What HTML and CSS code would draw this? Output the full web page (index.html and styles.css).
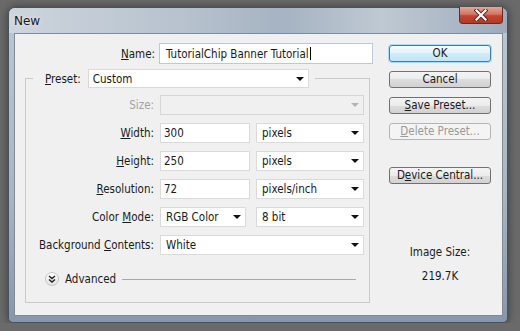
FILE: index.html
```html
<!DOCTYPE html>
<html lang="en">
<head>
  <meta charset="UTF-8">
  <title>New</title>
  <link rel="stylesheet" href="styles.css">
</head>
<body>
  <div class="window">
    <div class="titlebar">
      <span class="title">New</span>
      <span class="close">
        <svg width="14" height="12" viewBox="0 0 14 12">
          <path d="M2.5 1.5 L11.5 10.5 M11.5 1.5 L2.5 10.5" stroke="#5a2218" stroke-width="4" stroke-linecap="square"/>
          <path d="M2.5 1.5 L11.5 10.5 M11.5 1.5 L2.5 10.5" stroke="#fff" stroke-width="2.2" stroke-linecap="square"/>
        </svg>
      </span>
    </div>

    <div class="client">
      <div class="main">
        <div class="name-row">
          <span class="name-label"><u>N</u>ame:</span>
          <div class="field name-field">TutorialChip Banner Tutorial<span class="caret"></span></div>
        </div>

        <fieldset class="group">
          <legend class="legend">
            <span class="legend-label"><u>P</u>reset:</span>
            <div class="field select preset-select">Custom<span class="arrow"></span></div>
          </legend>

          <div class="rows">
            <div class="row">
              <span class="lbl disabled">Size:</span>
              <div class="field select off wide"><span class="arrow grey"></span></div>
            </div>
            <div class="row">
              <span class="lbl"><u>W</u>idth:</span>
              <div class="field input">300</div>
              <div class="field select unit">pixels<span class="arrow"></span></div>
            </div>
            <div class="row">
              <span class="lbl"><u>H</u>eight:</span>
              <div class="field input">250</div>
              <div class="field select unit">pixels<span class="arrow"></span></div>
            </div>
            <div class="row">
              <span class="lbl"><u>R</u>esolution:</span>
              <div class="field input">72</div>
              <div class="field select unit">pixels/inch<span class="arrow"></span></div>
            </div>
            <div class="row">
              <span class="lbl">Color <u>M</u>ode:</span>
              <div class="field select mode">RGB Color<span class="arrow"></span></div>
              <div class="field select unit">8 bit<span class="arrow"></span></div>
            </div>
            <div class="row">
              <span class="lbl">Background <u>C</u>ontents:</span>
              <div class="field select wide">White<span class="arrow"></span></div>
            </div>
          </div>

          <div class="advanced">
            <span class="adv-icon">
              <svg width="8" height="8" viewBox="0 0 8 8">
                <path d="M1 1 L4 3.5 L7 1 M1 4.5 L4 7 L7 4.5" fill="none" stroke="#222" stroke-width="1.4"/>
              </svg>
            </span>
            <span class="adv-text">Advanced</span>
            <span class="adv-line"></span>
          </div>
        </fieldset>
      </div>

      <div class="side">
        <button class="btn default">OK</button>
        <button class="btn">Cancel</button>
        <button class="btn"><u>S</u>ave Preset...</button>
        <button class="btn disabled-btn"><u>D</u>elete Preset...</button>
        <button class="btn device">D<u>e</u>vice Central...</button>
        <div class="image-size">
          <div>Image Size:</div>
          <div class="size-value">219.7K</div>
        </div>
      </div>
    </div>
  </div>
</body>
</html>
```

FILE: styles.css
```css
/* Page */
body {
  margin: 0;
  padding: 7px 0 0 8px;
  background: #6a6a6a;
  font-family: "DejaVu Sans Condensed", "DejaVu Sans", sans-serif;
  font-size: 11.5px;
  color: #1a1a1a;
}

u {
  text-decoration: underline;
  text-underline-offset: 1px;
}

/* Window frame */
.window {
  width: 500px;
  height: 316px;
  box-sizing: border-box;
  border: 1px solid #47525e;
  border-radius: 7px 7px 5px 5px;
  padding: 0 4px 6px 5px;
  background: linear-gradient(to bottom, #bcc7d2 0%, #a9b5c2 60%, #8797aa 100%);
  box-shadow: 0 0 8px rgba(0, 0, 0, 0.45);
}

.titlebar {
  height: 25px;
  display: flex;
  justify-content: space-between;
  align-items: flex-start;
  background: linear-gradient(to right, #cdd5dd 0%, #b7c2ce 35%, #a5b3c2 55%, #bfc9d3 75%, #9dabbb 100%);
  margin: 0 -4px 0 -5px;
  padding: 0 4px 0 5px;
  border-radius: 6px 6px 0 0;
}

.title {
  font-family: "DejaVu Sans", sans-serif;
  font-size: 12px;
  color: #1a1a1a;
  padding-top: 6px;
  text-shadow: 0 0 4px rgba(255, 255, 255, 0.8);
}

.close {
  width: 44px;
  height: 17px;
  margin-top: -1px;
  box-sizing: border-box;
  border: 1px solid #6b2a20;
  border-top: none;
  border-radius: 0 0 4px 4px;
  background: linear-gradient(to bottom, #e6a497 0%, #d37563 45%, #c2452f 55%, #b03a26 100%);
  display: flex;
  align-items: center;
  justify-content: center;
}

/* Client area */
.client {
  width: 489px;
  height: 283px;
  box-sizing: border-box;
  border: 1px solid #7c8c9e;
  background: #f0f0f0;
  display: flex;
}

.main {
  width: 362px;
  padding-top: 9px;
}

.name-row {
  display: flex;
  align-items: center;
}

.name-label {
  width: 140px;
  text-align: right;
  margin-right: 4px;
}

.field {
  height: 20px;
  box-sizing: border-box;
  border: 1px solid #dadada;
  background: #fff;
  display: flex;
  align-items: center;
  padding-left: 5px;
  white-space: nowrap;
}

.name-field {
  width: 214px;
  height: 21px;
  border-color: #b9cbda;
  padding-left: 6px;
}

.caret {
  width: 1px;
  height: 13px;
  background: #000;
  margin-left: 1px;
}

.select {
  position: relative;
}

.arrow {
  position: absolute;
  right: 4px;
  top: 7px;
  width: 0;
  height: 0;
  border-left: 4px solid transparent;
  border-right: 4px solid transparent;
  border-top: 4px solid #111;
}

.arrow.grey {
  border-top-color: #b4b4b4;
}

/* Group box */
.group {
  margin: 5px 0 0 10px;
  width: 345px;
  box-sizing: border-box;
  border: 1px solid #c9c9c9;
  padding: 0;
  min-width: 0;
}

.legend {
  margin-left: 7px;
  padding: 0 6px 0 12px;
  display: flex;
  align-items: center;
}

.legend-label {
  margin-right: 7px;
}

.preset-select {
  width: 221px;
  height: 19px;
  padding-left: 4px;
}

.rows {
  padding: 7px 5px 0 0;
  display: flex;
  flex-direction: column;
  gap: 8px;
}

.row {
  display: flex;
  align-items: center;
}

.lbl {
  width: 128px;
  text-align: right;
  margin-right: 6px;
  white-space: nowrap;
}

.disabled {
  color: #a3a3a3;
}

.wide {
  width: 204px;
}

.off {
  background: #f0f0f0;
  border-color: #d6d6d6;
}

.input {
  width: 90px;
  padding-left: 3px;
}

.mode {
  width: 86px;
}

.unit {
  width: 108px;
  margin-left: auto;
}

.mode + .unit {
  margin-left: 10px;
}

.input + .unit {
  margin-left: 6px;
}

/* Advanced */
.advanced {
  display: flex;
  align-items: center;
  margin: 17px 0 16px 19px;
}

.adv-icon {
  width: 14px;
  height: 14px;
  box-sizing: border-box;
  border: 1px solid #c4c4c4;
  border-radius: 50%;
  background: linear-gradient(to bottom, #ffffff, #e2e2e2);
  display: flex;
  align-items: center;
  justify-content: center;
}

.adv-text {
  margin: 0 6px 0 6px;
}

.adv-line {
  width: 234px;
  height: 1px;
  background: #a8a8a8;
}

/* Buttons column */
.side {
  width: 102px;
  margin-left: 12px;
  padding-top: 11px;
  display: flex;
  flex-direction: column;
  gap: 9px;
}

.btn {
  height: 17px;
  width: 102px;
  box-sizing: border-box;
  border: 1px solid #707070;
  border-radius: 3px;
  background: linear-gradient(to bottom, #f4f4f4 0%, #ebebeb 50%, #dddddd 50%, #d2d2d2 100%);
  font-family: inherit;
  font-size: 11.5px;
  color: #1a1a1a;
  padding: 0;
  line-height: 15px;
}

.btn.default {
  border-color: #3c7fb1;
  background: linear-gradient(to bottom, #f3fafe 0%, #e3f3fc 50%, #d2ecfa 50%, #c4e5f7 100%);
  box-shadow: 0 0 0 1px #a7dcf7;
}

.btn.disabled-btn {
  border-color: #b3b6b9;
  background: #f4f4f4;
  color: #9a9a9a;
}

.btn.device {
  margin-top: 18px;
}

.image-size {
  margin-top: 53px;
  text-align: center;
  line-height: 13px;
}

.size-value {
  margin-top: 11px;
}
```
